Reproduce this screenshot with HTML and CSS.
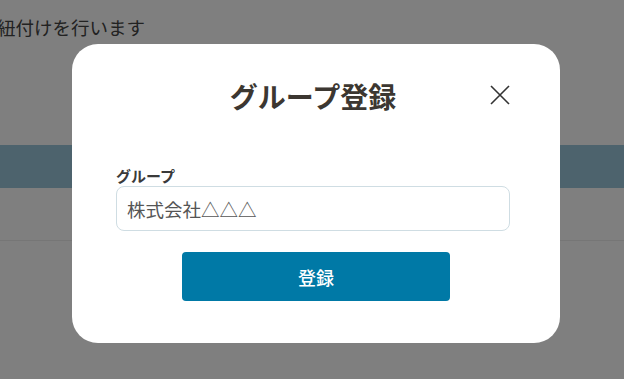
FILE: index.html
```html
<!DOCTYPE html>
<html lang="ja">
<head>
  <meta charset="UTF-8" />
  <meta name="viewport" content="width=device-width, initial-scale=1" />
  <title>グループ登録</title>
  <link rel="stylesheet" href="styles.css">
</head>
<body>
  <main class="page">
    <p class="lead">紐付けを行います</p>
    <div class="table">
      <div class="table-head"></div>
      <div class="table-row"></div>
    </div>
  </main>

  <div class="overlay">
    <section class="modal" role="dialog" aria-labelledby="modalTitle">
      <header class="modal-header">
        <span></span>
        <h2 id="modalTitle">グループ登録</h2>
        <button class="close-btn" aria-label="閉じる">
          <svg width="20" height="20" viewBox="0 0 20 20">
            <path d="M1 1 L19 19 M19 1 L1 19" stroke="#333" stroke-width="1.6" fill="none" />
          </svg>
        </button>
      </header>

      <form class="modal-form">
        <label for="groupName">グループ</label>
        <input type="text" id="groupName" value="株式会社△△△" />
        <button type="button" class="submit-btn">登録</button>
      </form>
    </section>
  </div>
</body>
</html>
```

FILE: styles.css
```css
:root {
  --primary: #0079a6;
  --text: #3c3731;
  --border: #cfdde3;
}

*, *::before, *::after { box-sizing: border-box; }

body {
  margin: 0;
  font-family: 'Noto Sans CJK JP', 'Noto Sans', sans-serif;
  background: #fff;
  color: #262626;
  height: 100vh;
  overflow: hidden;
}

.page {
  padding-top: 13px;
}

.lead {
  margin: 0 0 0 -3px;
  font-size: 18.5px;
  line-height: 28px;
  color: #444;
}

.table {
  margin-top: 104px;
}

.table-head {
  height: 43px;
  background: #9ac6da;
}

.table-row {
  height: 53px;
  border-bottom: 1px solid #ececec;
}

/* modal */
.overlay {
  position: fixed;
  inset: 0;
  background: rgba(0, 0, 0, 0.5);
  padding: 44px 64px 0 72px;
}

.modal {
  width: 488px;
  background: #fff;
  border-radius: 26px;
  padding: 32px 0 42px;
}

.modal-header {
  display: grid;
  grid-template-columns: 1fr auto 1fr;
  align-items: center;
  padding: 0 50px 0 44px;
}

.modal-header h2 {
  margin: 0;
  font-size: 28px;
  line-height: 40px;
  font-weight: 700;
  color: var(--text);
}

.close-btn {
  justify-self: end;
  background: none;
  border: none;
  padding: 0;
  width: 20px;
  height: 20px;
  cursor: pointer;
  display: flex;
  margin-top: -2px;
}

.modal-form {
  display: flex;
  flex-direction: column;
  padding: 0 44px;
  margin-top: 50px;
}

.modal-form label {
  font-size: 15px;
  line-height: 20px;
  font-weight: 700;
  color: #3a3a3a;
}

.modal-form input {
  width: 394px;
  height: 45px;
  border: 1px solid var(--border);
  border-radius: 8px;
  padding: 0 10px;
  font-family: inherit;
  font-size: 18.5px;
  color: #555;
  outline: none;
}

.submit-btn {
  align-self: center;
  margin-top: 21px;
  width: 268px;
  height: 49px;
  border: none;
  border-radius: 4px;
  background: var(--primary);
  color: #fff;
  font-family: inherit;
  font-size: 18px;
  font-weight: 500;
  cursor: pointer;
}
```
